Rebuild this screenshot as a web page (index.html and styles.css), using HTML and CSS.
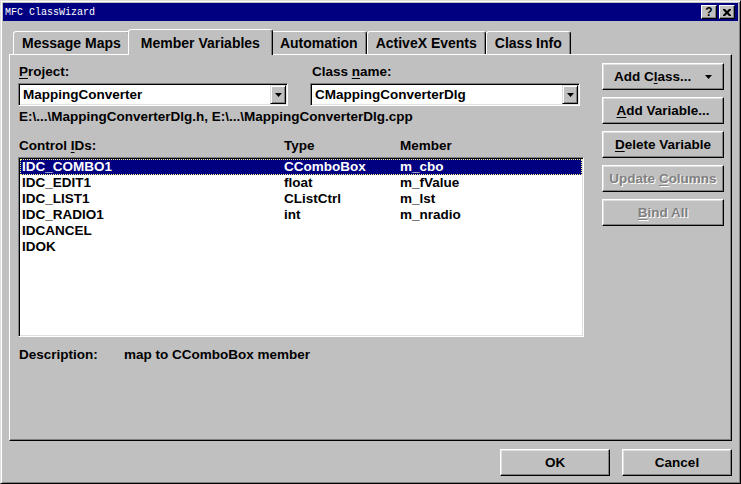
FILE: index.html
```html
<!DOCTYPE html>
<html>
<head>
<meta charset="utf-8">
<title>MFC ClassWizard</title>
<link rel="stylesheet" href="styles.css">
</head>
<body>
<div class="window">
  <div class="titlebar">
    <span class="title">MFC ClassWizard</span>
    <div class="tbtns">
      <span class="tbtn help">?</span>
      <span class="tbtn close"><svg width="8" height="7" viewBox="0 0 8 7"><path d="M0 0h2l2 2l2-2h2v1l-2.5 2.5l2.5 2.5v1h-2l-2-2l-2 2h-2v-1l2.5-2.5l-2.5-2.5z" fill="#000"/></svg></span>
    </div>
  </div>
  <div class="client">
    <div class="tabs">
      <div class="tab">Message Maps</div>
      <div class="tab active">Member Variables</div>
      <div class="tab">Automation</div>
      <div class="tab">ActiveX Events</div>
      <div class="tab">Class Info</div>
    </div>
    <div class="panel">
      <div class="main">
        <div class="selectors">
          <div class="field">
            <div class="lbl"><u>P</u>roject:</div>
            <div class="combo"><span class="combo-text">MappingConverter</span><span class="drop"><svg width="7" height="4" viewBox="0 0 7 4"><path d="M0 0h7l-3.5 4z" fill="#000"/></svg></span></div>
          </div>
          <div class="field">
            <div class="lbl lbl-class">Class <u>n</u>ame:</div>
            <div class="combo"><span class="combo-text">CMappingConverterDlg</span><span class="drop"><svg width="7" height="4" viewBox="0 0 7 4"><path d="M0 0h7l-3.5 4z" fill="#000"/></svg></span></div>
          </div>
        </div>
        <div class="path">E:\...\MappingConverterDlg.h, E:\...\MappingConverterDlg.cpp</div>
        <div class="head"><span>Control <u>I</u>Ds:</span><span>Type</span><span>Member</span></div>
        <div class="list">
          <div class="row sel"><span>IDC_COMBO1</span><span>CComboBox</span><span>m_cbo</span></div>
          <div class="row"><span>IDC_EDIT1</span><span>float</span><span>m_fValue</span></div>
          <div class="row"><span>IDC_LIST1</span><span>CListCtrl</span><span>m_lst</span></div>
          <div class="row"><span>IDC_RADIO1</span><span>int</span><span>m_nradio</span></div>
          <div class="row"><span>IDCANCEL</span><span></span><span></span></div>
          <div class="row"><span>IDOK</span><span></span><span></span></div>
        </div>
        <div class="desc"><span class="desc-lbl">Description:</span><span>map to CComboBox member</span></div>
      </div>
      <div class="side">
        <button class="btn btn-split"><span>Add C<u>l</u>ass...</span><svg width="7" height="4" viewBox="0 0 7 4"><path d="M0 0h7l-3.5 4z" fill="#000"/></svg></button>
        <button class="btn"><span><u>A</u>dd Variable...</span></button>
        <button class="btn"><span><u>D</u>elete Variable</span></button>
        <button class="btn disabled"><span>Update <u>C</u>olumns</span></button>
        <button class="btn disabled"><span><u>B</u>ind All</span></button>
      </div>
    </div>
    <div class="footer">
      <button class="btn btn-dlg">OK</button>
      <button class="btn btn-dlg">Cancel</button>
    </div>
  </div>
</div>
</body>
</html>
```

FILE: styles.css
```css
* { box-sizing: border-box; }
html, body { margin: 0; padding: 0; }
body {
  background: #c0c0c0;
  font-family: "Liberation Sans", Arial, sans-serif;
  font-weight: bold;
  font-size: 13.5px;
  color: #000;
}
u { text-decoration: underline; text-underline-offset: 2px; }

.window {
  width: 741px;
  height: 484px;
  border: 1px solid;
  border-color: #dfdfdf #000 #000 #dfdfdf;
  box-shadow: inset 1px 1px #fff, inset -1px -1px #808080;
  padding: 2px;
  background: #c0c0c0;
  display: flex;
  flex-direction: column;
}

.titlebar {
  height: 18px;
  flex: none;
  background: #000080;
  color: #fff;
  display: flex;
  align-items: center;
  justify-content: space-between;
  padding: 0 3px 0 2px;
}
.title {
  font-family: "Liberation Mono", monospace;
  font-weight: normal;
  font-size: 10px;
}
.tbtns { display: flex; gap: 2px; }
.tbtn {
  width: 16px;
  height: 14px;
  background: #c0c0c0;
  border: 1px solid;
  border-color: #fff #000 #000 #fff;
  box-shadow: inset -1px -1px #808080;
  display: flex;
  align-items: center;
  justify-content: center;
  color: #000;
  font-size: 12px;
  line-height: 1;
}

.client {
  flex: 1;
  padding: 0 6px;
  display: flex;
  flex-direction: column;
}

.tabs {
  height: 33px;
  flex: none;
  display: flex;
  align-items: flex-end;
  padding-left: 4px;
}
.tab {
  height: 23px;
  padding: 0 8px;
  border: 1px solid;
  border-bottom: none;
  border-color: #fff #000 transparent #fff;
  box-shadow: inset -1px 0 #808080;
  border-radius: 3px 3px 0 0;
  display: flex;
  align-items: center;
  font-size: 14px;
  background: #c0c0c0;
}
.tab.active {
  height: 26px;
  margin: 0 -2px -1px;
  padding: 0 12px;
  position: relative;
  z-index: 1;
}

.panel {
  height: 387px;
  flex: none;
  border: 1px solid;
  border-color: #fff #000 #000 #fff;
  box-shadow: inset -1px -1px #808080;
  display: flex;
  gap: 18px;
  padding: 8px 7px 0 8px;
}

.main { width: 566px; padding-top: 1px; }

.selectors {
  display: grid;
  grid-template-columns: 270px 270px;
  column-gap: 22px;
}
.lbl { line-height: 16px; padding-left: 1px; }
.lbl-class { padding-left: 2px; }
.combo {
  margin-top: 3px;
  height: 23px;
  background: #fff;
  border: 1px solid;
  border-color: #808080 #fff #fff #808080;
  box-shadow: inset 1px 1px #000, inset -1px -1px #dfdfdf;
  padding: 1px;
  display: flex;
  align-items: center;
}
.combo-text { padding-left: 3px; }
.drop {
  margin-left: auto;
  width: 16px;
  height: 19px;
  background: #c0c0c0;
  border: 1px solid;
  border-color: #dfdfdf #000 #000 #dfdfdf;
  box-shadow: inset 1px 1px #fff, inset -1px -1px #808080;
  display: flex;
  align-items: center;
  justify-content: center;
}
.drop svg { display: block; }

.path { margin-top: 3px; line-height: 16px; padding-left: 1px; }

.head {
  margin-top: 13px;
  line-height: 16px;
  display: grid;
  grid-template-columns: 265px 116px 1fr;
  padding-left: 1px;
}

.list {
  margin-top: 3px;
  height: 180px;
  background: #fff;
  border: 1px solid;
  border-color: #808080 #fff #fff #808080;
  box-shadow: inset 1px 1px #000, inset -1px -1px #dfdfdf;
  padding: 1px;
}
.row {
  height: 16px;
  line-height: 16px;
  display: grid;
  grid-template-columns: 262px 116px 1fr;
  padding-left: 2px;
  white-space: nowrap;
}
.row.sel {
  background: #000080;
  color: #fff;
  outline: 1px dotted #ffff80;
  outline-offset: -1px;
}

.desc {
  margin-top: 10px;
  line-height: 16px;
  display: flex;
}
.desc-lbl { width: 106px; padding-left: 1px; }

.side {
  width: 122px;
  display: flex;
  flex-direction: column;
  gap: 7px;
}
.btn {
  height: 27px;
  background: #c0c0c0;
  border: 1px solid;
  border-color: #fff #000 #000 #fff;
  box-shadow: inset -1px -1px #808080, inset 1px 1px #dfdfdf;
  font: inherit;
  color: #000;
  display: flex;
  align-items: center;
  justify-content: center;
  padding: 0;
  margin: 0;
}
.btn-split { justify-content: space-between; padding: 0 11px 0 11px; }
.btn.disabled { color: #808080; text-shadow: 1px 1px #fff; }

.footer {
  display: flex;
  justify-content: flex-end;
  gap: 12px;
  padding-top: 8px;
}
.btn-dlg { width: 110px; }
```
